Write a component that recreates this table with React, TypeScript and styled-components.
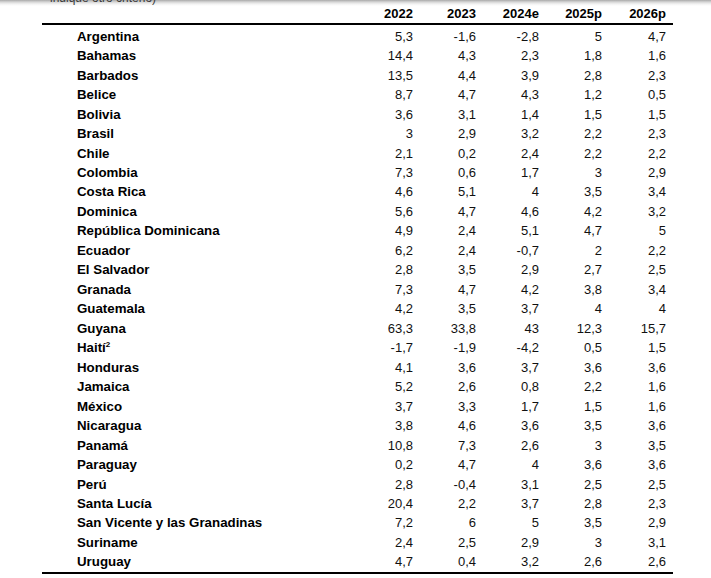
import styled, { createGlobalStyle } from "styled-components";

type Row = {
  country: string;
  note?: string;
  values: string[];
};

const years = ["2022", "2023", "2024e", "2025p", "2026p"];

const rows: Row[] = [
  { country: "Argentina", values: ["5,3", "-1,6", "-2,8", "5", "4,7"] },
  { country: "Bahamas", values: ["14,4", "4,3", "2,3", "1,8", "1,6"] },
  { country: "Barbados", values: ["13,5", "4,4", "3,9", "2,8", "2,3"] },
  { country: "Belice", values: ["8,7", "4,7", "4,3", "1,2", "0,5"] },
  { country: "Bolivia", values: ["3,6", "3,1", "1,4", "1,5", "1,5"] },
  { country: "Brasil", values: ["3", "2,9", "3,2", "2,2", "2,3"] },
  { country: "Chile", values: ["2,1", "0,2", "2,4", "2,2", "2,2"] },
  { country: "Colombia", values: ["7,3", "0,6", "1,7", "3", "2,9"] },
  { country: "Costa Rica", values: ["4,6", "5,1", "4", "3,5", "3,4"] },
  { country: "Dominica", values: ["5,6", "4,7", "4,6", "4,2", "3,2"] },
  { country: "República Dominicana", values: ["4,9", "2,4", "5,1", "4,7", "5"] },
  { country: "Ecuador", values: ["6,2", "2,4", "-0,7", "2", "2,2"] },
  { country: "El Salvador", values: ["2,8", "3,5", "2,9", "2,7", "2,5"] },
  { country: "Granada", values: ["7,3", "4,7", "4,2", "3,8", "3,4"] },
  { country: "Guatemala", values: ["4,2", "3,5", "3,7", "4", "4"] },
  { country: "Guyana", values: ["63,3", "33,8", "43", "12,3", "15,7"] },
  { country: "Haití", note: "2", values: ["-1,7", "-1,9", "-4,2", "0,5", "1,5"] },
  { country: "Honduras", values: ["4,1", "3,6", "3,7", "3,6", "3,6"] },
  { country: "Jamaica", values: ["5,2", "2,6", "0,8", "2,2", "1,6"] },
  { country: "México", values: ["3,7", "3,3", "1,7", "1,5", "1,6"] },
  { country: "Nicaragua", values: ["3,8", "4,6", "3,6", "3,5", "3,6"] },
  { country: "Panamá", values: ["10,8", "7,3", "2,6", "3", "3,5"] },
  { country: "Paraguay", values: ["0,2", "4,7", "4", "3,6", "3,6"] },
  { country: "Perú", values: ["2,8", "-0,4", "3,1", "2,5", "2,5"] },
  { country: "Santa Lucía", values: ["20,4", "2,2", "3,7", "2,8", "2,3"] },
  { country: "San Vicente y las Granadinas", values: ["7,2", "6", "5", "3,5", "2,9"] },
  { country: "Suriname", values: ["2,4", "2,5", "2,9", "3", "3,1"] },
  { country: "Uruguay", values: ["4,7", "0,4", "3,2", "2,6", "2,6"] },
];

export default function App() {
  return (
    <>
      <GlobalStyle />
      <Page>
        <Caption>indique otro criterio)</Caption>
        <Table>
          <HeaderRow>
            <NameCell />
            {years.map((y) => (
              <HeadCell key={y}>{y}</HeadCell>
            ))}
          </HeaderRow>
          <Body>
            {rows.map((row) => (
              <DataRow key={row.country}>
                <NameCell>
                  {row.country}
                  {row.note && <Note>{row.note}</Note>}
                </NameCell>
                {row.values.map((v, i) => (
                  <ValueCell key={i}>{v}</ValueCell>
                ))}
              </DataRow>
            ))}
          </Body>
        </Table>
      </Page>
    </>
  );
}

const GlobalStyle = createGlobalStyle`
  html, body {
    margin: 0;
    padding: 0;
    background: #ffffff;
  }
  body {
    font-family: "Liberation Sans", Arial, sans-serif;
    color: #000;
  }
`;

const Page = styled.div`
  width: 711px;
  height: 578px;
  overflow: hidden;
  background: linear-gradient(
    to bottom,
    #a9a9a9 0px,
    #d6d6d6 2px,
    #f2f2f2 4px,
    #ffffff 6px
  );
`;

const Caption = styled.div`
  margin: -9px 0 0 50px;
  height: 14px;
  font-size: 12px;
  line-height: 14px;
  color: #3a3a3a;
`;

const Table = styled.div`
  margin-left: 42px;
  width: 631px;
  display: flex;
  flex-direction: column;
`;

const columns = "308px 63px 63px 63px 63px 64px 7px";

const HeaderRow = styled.div`
  display: grid;
  grid-template-columns: ${columns};
  height: 18px;
  align-items: center;
  border-bottom: 2px solid #000;
  font-weight: bold;
  font-size: 13px;
`;

const HeadCell = styled.div`
  text-align: right;
  line-height: 18px;
`;

const Body = styled.div`
  display: flex;
  flex-direction: column;
  padding-top: 1.5px;
  border-bottom: 2px solid #000;
`;

const DataRow = styled.div`
  display: grid;
  grid-template-columns: ${columns};
  height: 19.48px;
  align-items: center;
  font-size: 13px;
`;

const NameCell = styled.div`
  padding-left: 35px;
  font-weight: bold;
  font-size: 13.3px;
  white-space: nowrap;
`;

const Note = styled.sup`
  font-size: 8px;
  line-height: 0;
  vertical-align: 5px;
`;

const ValueCell = styled.div`
  text-align: right;
  color: #111;
`;
